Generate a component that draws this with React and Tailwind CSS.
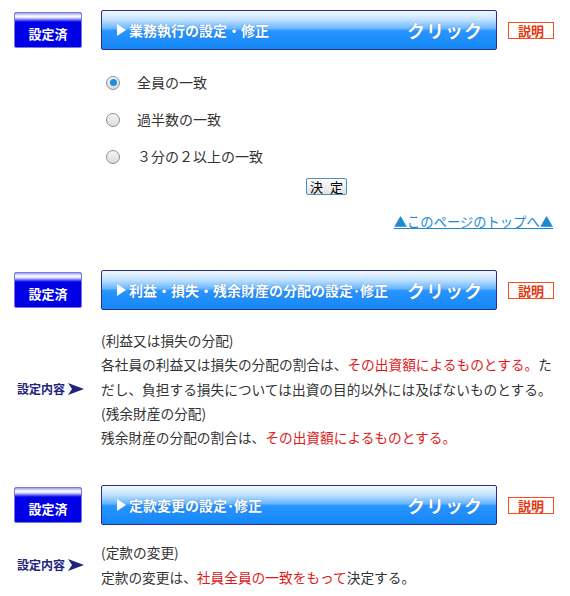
import React from "react";

const Done = () => (
  <div className="w-[68px] h-[36px] border border-[#7b7bd6] rounded-[2px] bg-[#0000e6] overflow-hidden flex flex-col shrink-0">
    <div className="h-[9px] bg-[linear-gradient(180deg,#9c9cf0_0%,#ffffff_35%,#d8d8ff_55%,#5a5af5_80%,#0000e6_100%)]" />
    <div className="flex-1 flex items-center justify-center text-white font-bold text-[13px] leading-none pb-[2px]">
      設定済
    </div>
  </div>
);

const Tri = () => (
  <svg width="9" height="12" viewBox="0 0 9 12" className="shrink-0">
    <polygon points="0,0 9,6 0,12" fill="#ffffff" />
  </svg>
);

const Bar = ({ title }) => (
  <div className="ml-[19px] w-[396px] h-[40px] border border-[#2c2c8c] rounded-[2px] bg-[linear-gradient(180deg,#f2f9ff_0%,#c4e3ff_22%,#6ab7ff_46%,#2894ff_52%,#1488f6_100%)] flex items-center pl-[15px] pr-[13px] text-white font-bold [text-shadow:0_0_1px_rgba(0,50,140,0.6)] shrink-0">
    <Tri />
    <span className="ml-[3px] text-[14px] leading-none whitespace-nowrap">{title}</span>
    <span className="ml-auto text-[18px] leading-none tracking-[1px] whitespace-nowrap">クリック</span>
  </div>
);

const Explain = () => (
  <div className="ml-[11px] w-[46px] h-[17px] border border-[#ff4a1a] bg-white text-[#e33a12] font-bold text-[13px] leading-none flex items-center justify-center shrink-0">
    説明
  </div>
);

const Header = ({ title }) => (
  <div className="flex items-center pl-[14px]">
    <Done />
    <Bar title={title} />
    <Explain />
  </div>
);

const Radio = ({ checked, label }) => (
  <div className="h-[37px] flex items-center">
    <span className="w-[14px] h-[14px] rounded-full border border-[#8f8f8f] bg-[linear-gradient(180deg,#f4f4f4,#dcdcdc)] flex items-center justify-center">
      {checked && <span className="w-[7px] h-[7px] rounded-full bg-[#1e8ce0]" />}
    </span>
    <span className="ml-[17px] text-[14px] text-[#333333]">{label}</span>
  </div>
);

const Label = () => (
  <div className="w-[101px] pl-[17px] flex items-center gap-[3px] text-[#23237e] font-bold text-[12px] shrink-0">
    設定内容
    <svg width="16" height="12" viewBox="0 0 16 12">
      <polygon points="0,0 16,6 0,12 4,6" fill="#23237e" />
    </svg>
  </div>
);

const Red = ({ children }) => <span className="text-[#e01818]">{children}</span>;

export default function App() {
  return (
    <div className="w-[570px] h-[596px] bg-white overflow-hidden font-[family-name:'Noto_Sans_CJK_JP','Noto_Sans',sans-serif] text-[#333333]">
      <div className="pt-[10px]">
        <Header title="業務執行の設定・修正" />
      </div>

      <div className="mt-[14px] pl-[106px]">
        <Radio checked label="全員の一致" />
        <Radio label="過半数の一致" />
        <Radio label="３分の２以上の一致" />
      </div>

      <div className="mt-[3px] pl-[306px]">
        <button className="w-[41px] h-[17px] border border-[#4d8fbf] rounded-[2px] bg-[linear-gradient(180deg,#ffffff,#e2e2e2)] text-[13px] leading-none text-black flex items-center justify-between px-[3px]">
          <span>決</span>
          <span>定</span>
        </button>
      </div>

      <div className="mt-[17px] pr-[17px] flex justify-end">
        <a href="#top" className="text-[13.3px] leading-[20px] text-[#1b8ad3] underline">
          ▲このページのトップへ▲
        </a>
      </div>

      <div className="mt-[38px]">
        <Header title="利益・損失・残余財産の分配の設定･修正" />
      </div>

      <div className="mt-[18px] flex items-center">
        <Label />
        <div className="w-[456px] text-[13.7px] leading-[24.3px]">
          <div>(利益又は損失の分配)</div>
          <div>
            各社員の利益又は損失の分配の割合は、<Red>その出資額によるものとする。</Red>ただし、負担する損失については出資の目的以外には及ばないものとする。
          </div>
          <div>(残余財産の分配)</div>
          <div>
            残余財産の分配の割合は、<Red>その出資額によるものとする。</Red>
          </div>
        </div>
      </div>

      <div className="mt-[36px]">
        <Header title="定款変更の設定･修正" />
      </div>

      <div className="mt-[15px] flex items-center">
        <Label />
        <div className="w-[456px] text-[13.7px] leading-[24.3px]">
          <div>(定款の変更)</div>
          <div>
            定款の変更は、<Red>社員全員の一致をもって</Red>決定する。
          </div>
        </div>
      </div>
    </div>
  );
}
